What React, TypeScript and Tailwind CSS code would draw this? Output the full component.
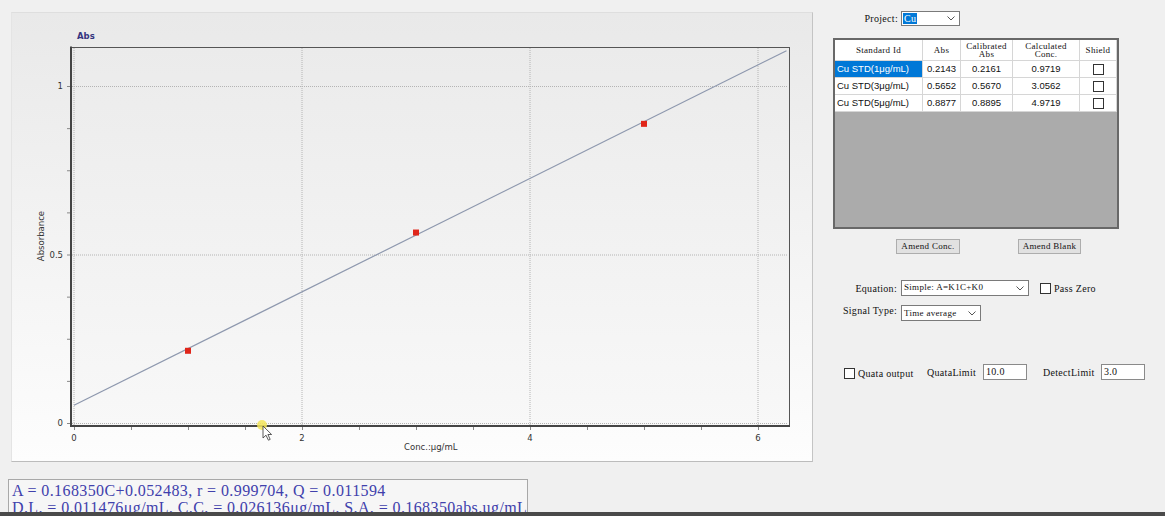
import React from "react";

const X0 = 73;
const XU = 114;
const Y0 = 422;
const YU = 337;

const px = (c: number) => X0 + c * XU;
const py = (a: number) => Y0 - a * YU;

const points = [
  { c: 1, a: 0.2143 },
  { c: 3, a: 0.5652 },
  { c: 5, a: 0.8877 },
];

const rows = [
  { id: "Cu STD(1μg/mL)", abs: "0.2143", cal: "0.2161", conc: "0.9719" },
  { id: "Cu STD(3μg/mL)", abs: "0.5652", cal: "0.5670", conc: "3.0562" },
  { id: "Cu STD(5μg/mL)", abs: "0.8877", cal: "0.8895", conc: "4.9719" },
];

function Chevron({ className = "" }: { className?: string }) {
  return (
    <svg width="8" height="5" viewBox="0 0 8 5" className={className}>
      <path d="M0.5 0.5 L4 4 L7.5 0.5" fill="none" stroke="#555" strokeWidth="1" />
    </svg>
  );
}

function Box() {
  return <div className="w-[11px] h-[11px] border border-[#333] bg-white" />;
}

function Chart() {
  const lineEnd = 6.25;
  const minorX = Array.from({ length: 13 }, (_, i) => i * 0.5);
  const minorY = Array.from({ length: 9 }, (_, i) => i * 0.125);
  return (
    <svg width="802" height="456" viewBox="11 12 802 456" className="block">
      <defs>
        <linearGradient id="plotbg" x1="0" y1="0" x2="0" y2="1">
          <stop offset="0" stopColor="#ebebeb" />
          <stop offset="1" stopColor="#f8f8f8" />
        </linearGradient>
      </defs>
      <rect x="70" y="46" width="718" height="379" fill="url(#plotbg)" />
      {/* grid */}
      {[0, 2, 4, 6].map((c) => (
        <line key={"gx" + c} x1={px(c)} y1="47" x2={px(c)} y2="424" stroke="#b4b4b4" strokeWidth="1" strokeDasharray="1 1" />
      ))}
      {[0, 0.5, 1].map((a) => (
        <line key={"gy" + a} x1="71" y1={py(a) + 0.5} x2="787" y2={py(a) + 0.5} stroke="#b4b4b4" strokeWidth="1" strokeDasharray="1 1" />
      ))}
      {/* frame */}
      <line x1="70" y1="46.5" x2="788.5" y2="46.5" stroke="#555" strokeWidth="1" />
      <line x1="788.5" y1="46" x2="788.5" y2="425" stroke="#555" strokeWidth="1" />
      <line x1="70" y1="45.5" x2="70" y2="426" stroke="#444" strokeWidth="2" />
      <line x1="69" y1="425" x2="789" y2="425" stroke="#444" strokeWidth="2" />
      {/* ticks */}
      {minorX.map((c) => (
        <line key={"tx" + c} x1={px(c) + 0.5} y1="426" x2={px(c) + 0.5} y2="429" stroke="#888" strokeWidth="1" />
      ))}
      {minorY.map((a) => (
        <line key={"ty" + a} x1="66" y1={py(a) + 0.5} x2="69" y2={py(a) + 0.5} stroke="#888" strokeWidth="1" />
      ))}
      {/* fit line */}
      <line
        x1={px(0)}
        y1={py(0.052483)}
        x2={px(lineEnd)}
        y2={py(0.16835 * lineEnd + 0.052483)}
        stroke="#8e98ae"
        strokeWidth="1.2"
      />
      {points.map((p) => (
        <rect key={p.c} x={px(p.c) - 3} y={py(p.a) - 3} width="6" height="6" fill="#e0261a" />
      ))}
      {/* labels */}
      <g fontFamily="'DejaVu Sans', sans-serif" fontSize="8.5" fill="#333">
        <text x="76" y="38" fill="#35357f" fontWeight="bold" fontSize="8.5">Abs</text>
        <text x="62" y={py(1) + 3} textAnchor="end">1</text>
        <text x="62" y={py(0.5) + 3} textAnchor="end">0.5</text>
        <text x="62" y={py(0) + 3} textAnchor="end">0</text>
        {[0, 2, 4, 6].map((c) => (
          <text key={"lx" + c} x={px(c)} y="440" textAnchor="middle">{c}</text>
        ))}
        <text x="403" y="449">Conc.:μg/mL</text>
        <text x="43" y="235" textAnchor="middle" transform="rotate(-90 43 235)">Absorbance</text>
      </g>
      {/* mouse cursor */}
      <circle cx="261" cy="424" r="5" fill="#f3e55a" opacity="0.85" />
      <path d="M262 425 L262 437 L265 434.2 L267.4 439.2 L269.2 438.4 L266.9 433.5 L270.6 433.5 Z" fill="#fff" stroke="#333" strokeWidth="0.8" />
    </svg>
  );
}

export default function App() {
  const serif = "font-['Liberation_Serif',serif]";
  return (
    <div className="relative w-[1165px] h-[516px] overflow-hidden bg-[#f0f0f0] flex text-[#111]">
      <div className="w-[833px] shrink-0 pl-[11px] pt-[12px] flex flex-col">
        <div className="w-[802px] h-[456px] bg-gradient-to-b from-[#e9e9e9] to-[#fdfdfd] border-t border-t-[#dedede] border-r border-r-[#c4c4c4] border-b border-b-[#bcbcbc] border-l border-l-[#e4e4e4] box-border overflow-hidden">
          <Chart />
        </div>
        <div className={`mt-[17px] -ml-[3px] w-[520px] flex-1 bg-[#f6f6f6] border-t border-l border-r border-[#a8a8a8] pl-[3px] pt-[2px] text-[16px] leading-[17px] tracking-[0.4px] text-[#4040ac] whitespace-pre ${serif}`}>
          <div>A = 0.168350C+0.052483, r = 0.999704, Q = 0.011594</div>
          <div>D.L. = 0.011476μg/mL, C.C. = 0.026136μg/mL, S.A. = 0.168350abs.ug/mL</div>
        </div>
      </div>

      <div className={`flex-1 pt-[11px] flex flex-col text-[10px] tracking-[0.3px] ${serif}`}>
        {/* project */}
        <div className="flex items-center h-[15px]">
          <span className="w-[68px] pr-[3px] text-right">Project:</span>
          <div className="w-[59px] h-[15px] bg-white border border-[#7a7a7a] flex items-center pl-[1px] pr-[4px] justify-between">
            <span className="bg-[#0078d7] text-white leading-[11px] px-[1px]">Cu</span>
            <Chevron />
          </div>
        </div>

        {/* table */}
        <div className="mt-[12px] w-[286px] h-[191px] border-2 border-[#686868] bg-[#ababab] overflow-hidden tracking-normal">
          <div className="grid grid-cols-[88px_38px_52px_67px_37px] bg-white">
            {["Standard Id", "Abs", "Calibrated Abs", "Calculated Conc.", "Shield"].map((h, i) => (
              <div
                key={h}
                className={`h-[21px] flex items-center justify-center text-center text-[9px] leading-[8px] tracking-[0.3px] border-r border-b border-[#d6d6d6] ${i === 2 ? "px-[3px]" : i === 3 ? "px-[10px]" : ""}`}
              >
                {h}
              </div>
            ))}
            {rows.map((r, ri) => (
              <React.Fragment key={r.id}>
                <div
                  className={`h-[17px] flex items-center pl-[2px] text-[9.5px] font-['Liberation_Sans',sans-serif] border-r border-b border-[#d6d6d6] ${ri === 0 ? "bg-[#0078d7] text-white" : ""}`}
                >
                  {r.id}
                </div>
                {[r.abs, r.cal, r.conc].map((v, vi) => (
                  <div
                    key={vi}
                    className="h-[17px] flex items-center justify-center text-[9.5px] font-['Liberation_Sans',sans-serif] border-r border-b border-[#d6d6d6]"
                  >
                    {v}
                  </div>
                ))}
                <div className="h-[17px] flex items-center justify-center border-r border-b border-[#d6d6d6]">
                  <Box />
                </div>
              </React.Fragment>
            ))}
          </div>
        </div>

        {/* buttons */}
        <div className="mt-[10px] pl-[63px] flex gap-[58px]">
          <button className="w-[64px] h-[15px] bg-[#e1e1e1] border border-[#adadad] text-[9px] leading-[13px]">Amend Conc.</button>
          <button className="w-[63px] h-[15px] bg-[#e1e1e1] border border-[#adadad] text-[9px] leading-[13px]">Amend Blank</button>
        </div>

        {/* equation */}
        <div className="mt-[26px] flex items-center h-[16px]">
          <span className="w-[68px] pr-[4px] text-right">Equation:</span>
          <div className="w-[128px] h-[16px] bg-white border border-[#7a7a7a] flex items-center justify-between pl-[2px] pr-[4px]">
            <span className="text-[9px]">Simple: A=K1C+K0</span>
            <Chevron />
          </div>
          <div className="ml-[11px]">
            <Box />
          </div>
          <span className="ml-[3px]">Pass Zero</span>
        </div>

        {/* signal type */}
        <div className="mt-[9px] flex items-start h-[16px]">
          <span className="w-[68px] pr-[4px] text-right -mt-[2px] whitespace-nowrap">Signal Type:</span>
          <div className="w-[80px] h-[16px] bg-white border border-[#7a7a7a] flex items-center justify-between pl-[2px] pr-[4px]">
            <span className="text-[9px] pt-[1px]">Time average</span>
            <Chevron />
          </div>
        </div>

        {/* quata */}
        <div className="mt-[43px] flex items-center h-[16px]">
          <div className="ml-[11px] mt-[2px]">
            <Box />
          </div>
          <span className="ml-[3px] mt-[2px] w-[69px] whitespace-nowrap">Quata output</span>
          <span className="w-[56px]">QuataLimit</span>
          <div className="w-[44px] h-[16px] bg-white border border-[#8a8a8a] pl-[2px] leading-[14px]">10.0</div>
          <span className="ml-[16px] w-[58px]">DetectLimit</span>
          <div className="w-[44px] h-[16px] bg-white border border-[#8a8a8a] pl-[2px] leading-[14px]">3.0</div>
        </div>
      </div>

      <div className="absolute left-0 bottom-0 w-full h-[4px] bg-[#4a4a4a]" />
    </div>
  );
}
